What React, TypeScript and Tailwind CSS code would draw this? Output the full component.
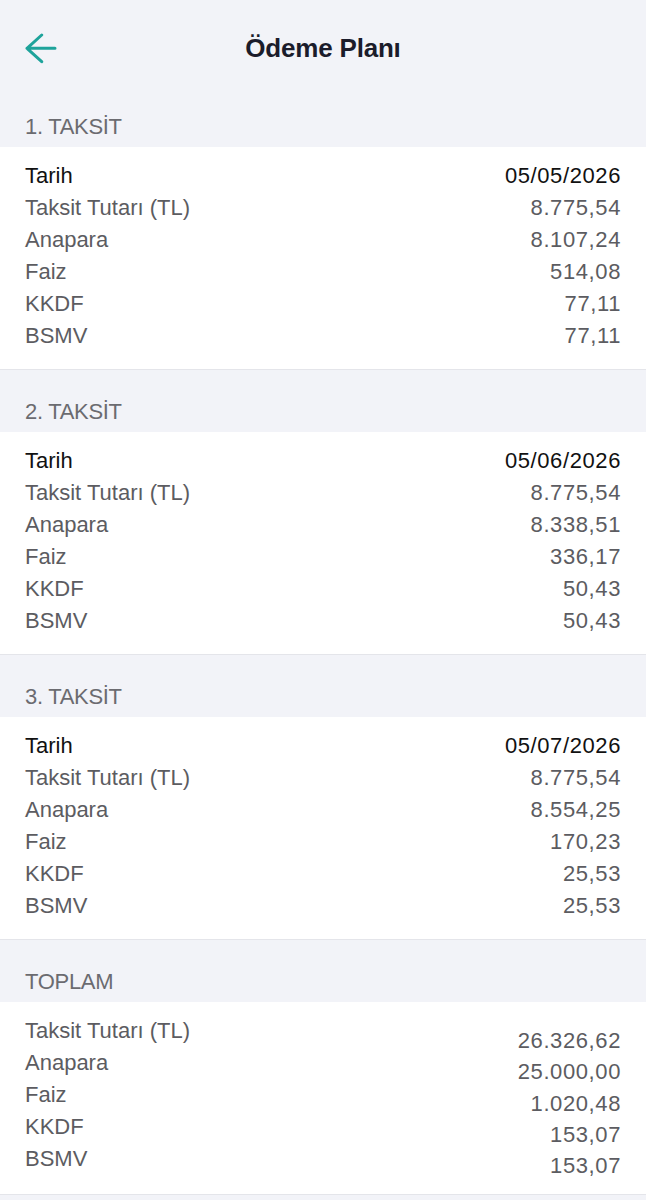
import React from "react";

type Row = { label: string; value: string };

const taksitler: { title: string; rows: Row[] }[] = [
  {
    title: "1. TAKSİT",
    rows: [
      { label: "Tarih", value: "05/05/2026" },
      { label: "Taksit Tutarı (TL)", value: "8.775,54" },
      { label: "Anapara", value: "8.107,24" },
      { label: "Faiz", value: "514,08" },
      { label: "KKDF", value: "77,11" },
      { label: "BSMV", value: "77,11" },
    ],
  },
  {
    title: "2. TAKSİT",
    rows: [
      { label: "Tarih", value: "05/06/2026" },
      { label: "Taksit Tutarı (TL)", value: "8.775,54" },
      { label: "Anapara", value: "8.338,51" },
      { label: "Faiz", value: "336,17" },
      { label: "KKDF", value: "50,43" },
      { label: "BSMV", value: "50,43" },
    ],
  },
  {
    title: "3. TAKSİT",
    rows: [
      { label: "Tarih", value: "05/07/2026" },
      { label: "Taksit Tutarı (TL)", value: "8.775,54" },
      { label: "Anapara", value: "8.554,25" },
      { label: "Faiz", value: "170,23" },
      { label: "KKDF", value: "25,53" },
      { label: "BSMV", value: "25,53" },
    ],
  },
];

const toplam: Row[] = [
  { label: "Taksit Tutarı (TL)", value: "26.326,62" },
  { label: "Anapara", value: "25.000,00" },
  { label: "Faiz", value: "1.020,48" },
  { label: "KKDF", value: "153,07" },
  { label: "BSMV", value: "153,07" },
];

const SectionTitle: React.FC<{ children: React.ReactNode }> = ({ children }) => (
  <div className="px-[25px] pb-[4px] pt-[26px] text-[22px] leading-[32px] tracking-[-0.3px] text-[#6b6b70]">
    {children}
  </div>
);

const App: React.FC = () => {
  return (
    <div className="min-h-[1200px] w-full bg-[#f2f3f8] font-['Liberation_Sans',Arial,sans-serif]">
      {/* nav bar */}
      <header className="grid h-[85px] grid-cols-[1fr_auto_1fr] items-center pt-[11px]">
        <button className="ml-[25px] flex h-[32px] w-[32px] items-center" aria-label="Geri">
          <svg width="32" height="32" viewBox="0 0 32 32" fill="none">
            <path
              d="M30 16.3H2M16.7 3L2 16.3l14.7 13.4"
              stroke="#1ea39b"
              strokeWidth="3"
              strokeLinecap="round"
              strokeLinejoin="round"
            />
          </svg>
        </button>
        <h1 className="text-[26px] font-bold tracking-[-0.2px] text-[#1b1c2b]">Ödeme Planı</h1>
        <div />
      </header>

      {taksitler.map((t, i) => (
        <section key={t.title}>
          <SectionTitle>{t.title}</SectionTitle>
          <div className="border-b border-[#e4e5ea] bg-white px-[25px] pb-[17px] pt-[13px] text-[22px] leading-[32px]">
            {t.rows.map((r, j) => (
              <div
                key={r.label}
                className={`flex justify-between ${j === 0 ? "text-[#111111]" : "text-[#5c5c61]"}`}
              >
                <span>{r.label}</span>
                <span className="tracking-[0.6px]">{r.value}</span>
              </div>
            ))}
          </div>
        </section>
      ))}

      <section>
        <SectionTitle>TOPLAM</SectionTitle>
        <div className="flex justify-between border-b border-[#e4e5ea] bg-white px-[25px] text-[22px] text-[#5c5c61]">
          <div className="flex flex-col pt-[13px] leading-[32px]">
            {toplam.map((r) => (
              <span key={r.label}>{r.label}</span>
            ))}
          </div>
          <div className="flex flex-col items-end pb-[13px] pt-[23px] leading-[31.3px] tracking-[0.6px]">
            {toplam.map((r) => (
              <span key={r.label}>{r.value}</span>
            ))}
          </div>
        </div>
      </section>
    </div>
  );
};

export default App;
